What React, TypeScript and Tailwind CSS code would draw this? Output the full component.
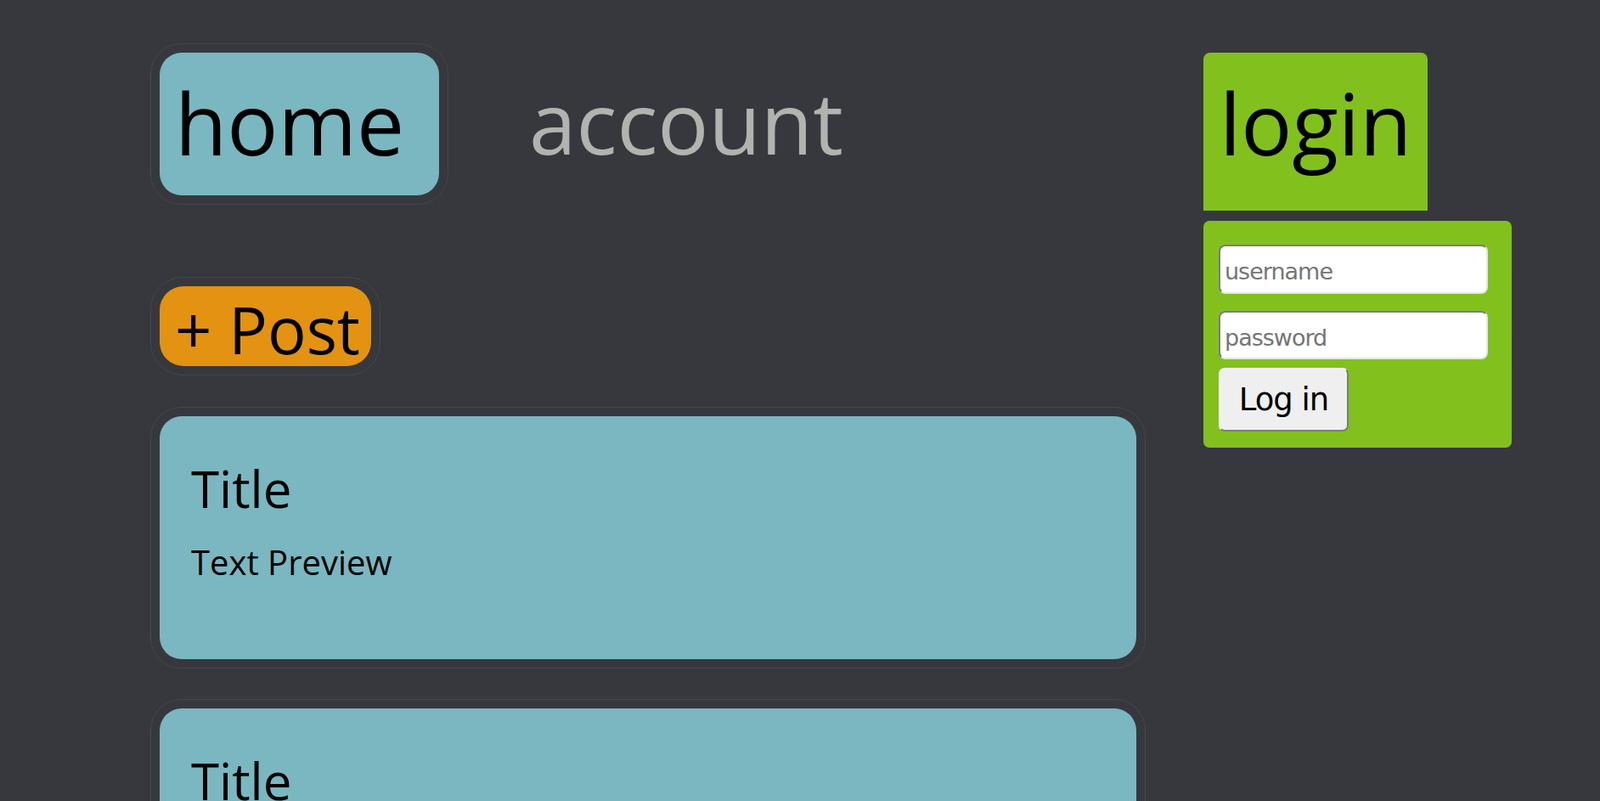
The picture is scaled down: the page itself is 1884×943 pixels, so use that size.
export default function App() {
  return (
    <div className="min-h-screen bg-[#37383e] font-['Open_Sans',sans-serif]">
      <div className="flex items-start gap-[68px] pl-[177px] pt-[51px]">
        <div className="flex w-[1172px] flex-col items-start">
          <nav className="flex items-start gap-[68px]">
            <div className="rounded-[36px] border border-[#46474d] p-[10px]">
              <a className="flex h-[168px] w-[329px] items-center rounded-[26px] bg-[#7ab7c0] pb-[4px] pl-[18px] text-[100px] leading-none text-black">
                home
              </a>
            </div>
            <div className="rounded-[36px] border border-transparent p-[10px]">
              <a className="flex h-[168px] items-center pb-[6px] pl-[16px] text-[100px] leading-none text-[#b1b3ae]">
                account
              </a>
            </div>
          </nav>

          <div className="mt-[85px] rounded-[38px] border border-[#46474d] p-[10px]">
            <button className="block h-[94px] w-[249px] rounded-[28px] bg-[#e39212] pl-[18px] pt-[8px] text-left text-[76px] leading-none text-black">
              + Post
            </button>
          </div>

          {[0, 1].map((i) => (
            <div
              key={i}
              className={`w-full rounded-[36px] border border-[#46474d] p-[10px] ${i === 0 ? "mt-[37px]" : "mt-[36px]"}`}
            >
              <div className="h-[286px] rounded-[26px] bg-[#7ab7c0] pl-[37px] pt-[55px] text-black">
                <h2 className="text-[60px] leading-none">Title</h2>
                <p className="mt-[37px] text-[40px] leading-none">Text Preview</p>
              </div>
            </div>
          ))}
        </div>

        <div className="mt-[11px] flex flex-col items-start">
          <div className="h-[186px] rounded-t-[8px] bg-[#82c01e] px-[19px] pt-[32px] text-[100px] leading-none text-black">
            login
          </div>
          <form className="mt-[12px] w-[363px] rounded-[7px] bg-[#82c01e] pb-[19px] pl-[18px] pt-[28px] font-['DejaVu_Sans',sans-serif]">
            <input
              type="text"
              placeholder="username"
              className="block h-[58px] w-[317px] rounded-[8px] border-2 border-b-[#e6e6e6] border-l-[#7d7d7d] border-r-[#e6e6e6] border-t-[#7d7d7d] bg-white px-[5px] pt-[5px] text-[27px] tracking-[-1px] text-black outline-none placeholder:text-[#757575]"
            />
            <input
              type="password"
              placeholder="password"
              className="mt-[20px] block h-[57px] w-[317px] rounded-[8px] border-2 border-b-[#e6e6e6] border-l-[#7d7d7d] border-r-[#e6e6e6] border-t-[#7d7d7d] bg-white px-[5px] pt-[5px] text-[27px] tracking-[-1px] text-black outline-none placeholder:text-[#757575]"
            />
            <button
              type="button"
              className="mt-[10px] block h-[75px] w-[153px] rounded-[7px] border-2 border-b-[#7d7d7d] border-l-[#f4f4f4] border-r-[#7d7d7d] border-t-[#f4f4f4] bg-[#efefef] text-[37px] tracking-[-1px] text-black"
            >
              Log in
            </button>
          </form>
        </div>
      </div>
    </div>
  );
}
